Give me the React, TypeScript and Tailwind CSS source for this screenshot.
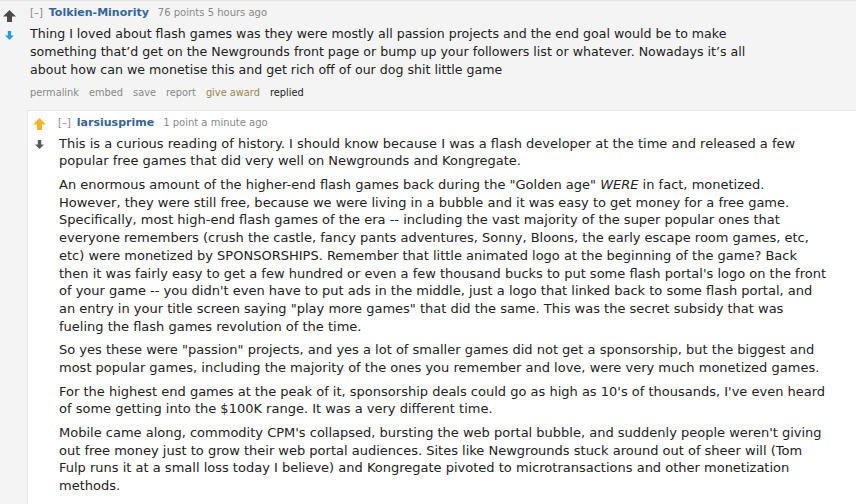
import React from 'react';

const UpArrow: React.FC<{ color: string }> = ({ color }) => (
    <svg width="13" height="12" viewBox="0 0 13 12">
        <path d="M6.5 0 L13 6.5 L9 6.5 L9 12 L4 12 L4 6.5 L0 6.5 Z" fill={color} />
    </svg>
);

const DownArrow: React.FC<{ color: string }> = ({ color }) => (
    <svg width="9" height="9" viewBox="0 0 9 9">
        <path d="M4.5 9 L0 4.5 L2.8 4.5 L2.8 0 L6.2 0 L6.2 4.5 L9 4.5 Z" fill={color} />
    </svg>
);

const Tagline: React.FC<{ author: string; meta: string }> = ({ author, meta }) => (
    <div className="flex items-baseline gap-[6px] text-[10px] leading-[13px] text-[#888]">
        <span>[–]</span>
        <span className="font-bold text-[#369] text-[11px]">{author}</span>
        <span className="ml-[3px]">{meta}</span>
    </div>
);

// Lines are kept as they wrap in the original thread
const PARENT_LINES: React.ReactNode[] = [
    'Thing I loved about flash games was they were mostly all passion projects and the end goal would be to make',
    'something that’d get on the Newgrounds front page or bump up your followers list or whatever. Nowadays it’s all',
    'about how can we monetise this and get rich off of our dog shit little game',
];

const NESTED_PARAGRAPHS: React.ReactNode[][] = [
    [
        'This is a curious reading of history. I should know because I was a flash developer at the time and released a few',
        'popular free games that did very well on Newgrounds and Kongregate.',
    ],
    [
        <>An enormous amount of the higher-end flash games back during the "Golden age" <em>WERE</em> in fact, monetized.</>,
        'However, they were still free, because we were living in a bubble and it was easy to get money for a free game.',
        'Specifically, most high-end flash games of the era -- including the vast majority of the super popular ones that',
        'everyone remembers (crush the castle, fancy pants adventures, Sonny, Bloons, the early escape room games, etc,',
        'etc) were monetized by SPONSORSHIPS. Remember that little animated logo at the beginning of the game? Back',
        "then it was fairly easy to get a few hundred or even a few thousand bucks to put some flash portal's logo on the front",
        "of your game -- you didn't even have to put ads in the middle, just a logo that linked back to some flash portal, and",
        'an entry in your title screen saying "play more games" that did the same. This was the secret subsidy that was',
        'fueling the flash games revolution of the time.',
    ],
    [
        'So yes these were "passion" projects, and yes a lot of smaller games did not get a sponsorship, but the biggest and',
        'most popular games, including the majority of the ones you remember and love, were very much monetized games.',
    ],
    [
        "For the highest end games at the peak of it, sponsorship deals could go as high as 10's of thousands, I've even heard",
        'of some getting into the $100K range. It was a very different time.',
    ],
    [
        "Mobile came along, commodity CPM's collapsed, bursting the web portal bubble, and suddenly people weren't giving",
        'out free money just to grow their web portal audiences. Sites like Newgrounds stuck around out of sheer will (Tom',
        'Fulp runs it at a small loss today I believe) and Kongregate pivoted to microtransactions and other monetization',
        'methods.',
    ],
];

const Lines: React.FC<{ lines: React.ReactNode[] }> = ({ lines }) => (
    <>
        {lines.map((line, i) => (
            <span key={i} className="block whitespace-nowrap">{line}</span>
        ))}
    </>
);

const App: React.FC = () => {
    return (
        <div className="h-[504px] w-[856px] overflow-hidden bg-[#f4f4f4] border-t border-[#e2e2e2] font-['DejaVu_Sans',sans-serif] text-[#222]">
            {/* Parent comment */}
            <div className="flex pl-[3px] pt-[5px]">
                <div className="flex w-[27px] flex-col items-start">
                    <div className="mt-[4px]"><UpArrow color="#4a4a4a" /></div>
                    <div className="ml-[2px] mt-[9px]"><DownArrow color="#2a9be0" /></div>
                </div>
                <div className="flex-1">
                    <Tagline author="Tolkien-Minority" meta="76 points 5 hours ago" />
                    <div className="mt-[6px] text-[12.6px] leading-[17.9px]">
                        <Lines lines={PARENT_LINES} />
                    </div>
                    <div className="mt-[8px] flex gap-[10px] text-[9.8px] leading-[12px] text-[#888]">
                        <span>permalink</span>
                        <span>embed</span>
                        <span>save</span>
                        <span>report</span>
                        <span className="text-[#9a8449]">give award</span>
                        <span className="text-[#222]">replied</span>
                    </div>
                </div>
            </div>

            {/* Child comment */}
            <div className="ml-[27px] mt-[11px] flex h-[400px] border-l border-t border-[#e6e6e6] bg-white pl-[4px] pt-[5px]">
                <div className="flex w-[27px] flex-col items-start">
                    <div className="ml-[1px] mt-[2px]"><UpArrow color="#fbb02a" /></div>
                    <div className="ml-[3px] mt-[10px]"><DownArrow color="#5a5a5a" /></div>
                </div>
                <div className="flex-1">
                    <div className="-ml-[1px]">
                        <Tagline author="larsiusprime" meta="1 point a minute ago" />
                    </div>
                    <div className="mt-[6px] text-[13px] leading-[17.75px]">
                        {NESTED_PARAGRAPHS.map((p, i) => (
                            <p key={i} className="mb-[5.75px]"><Lines lines={p} /></p>
                        ))}
                    </div>
                </div>
            </div>
        </div>
    );
};

export default App;
